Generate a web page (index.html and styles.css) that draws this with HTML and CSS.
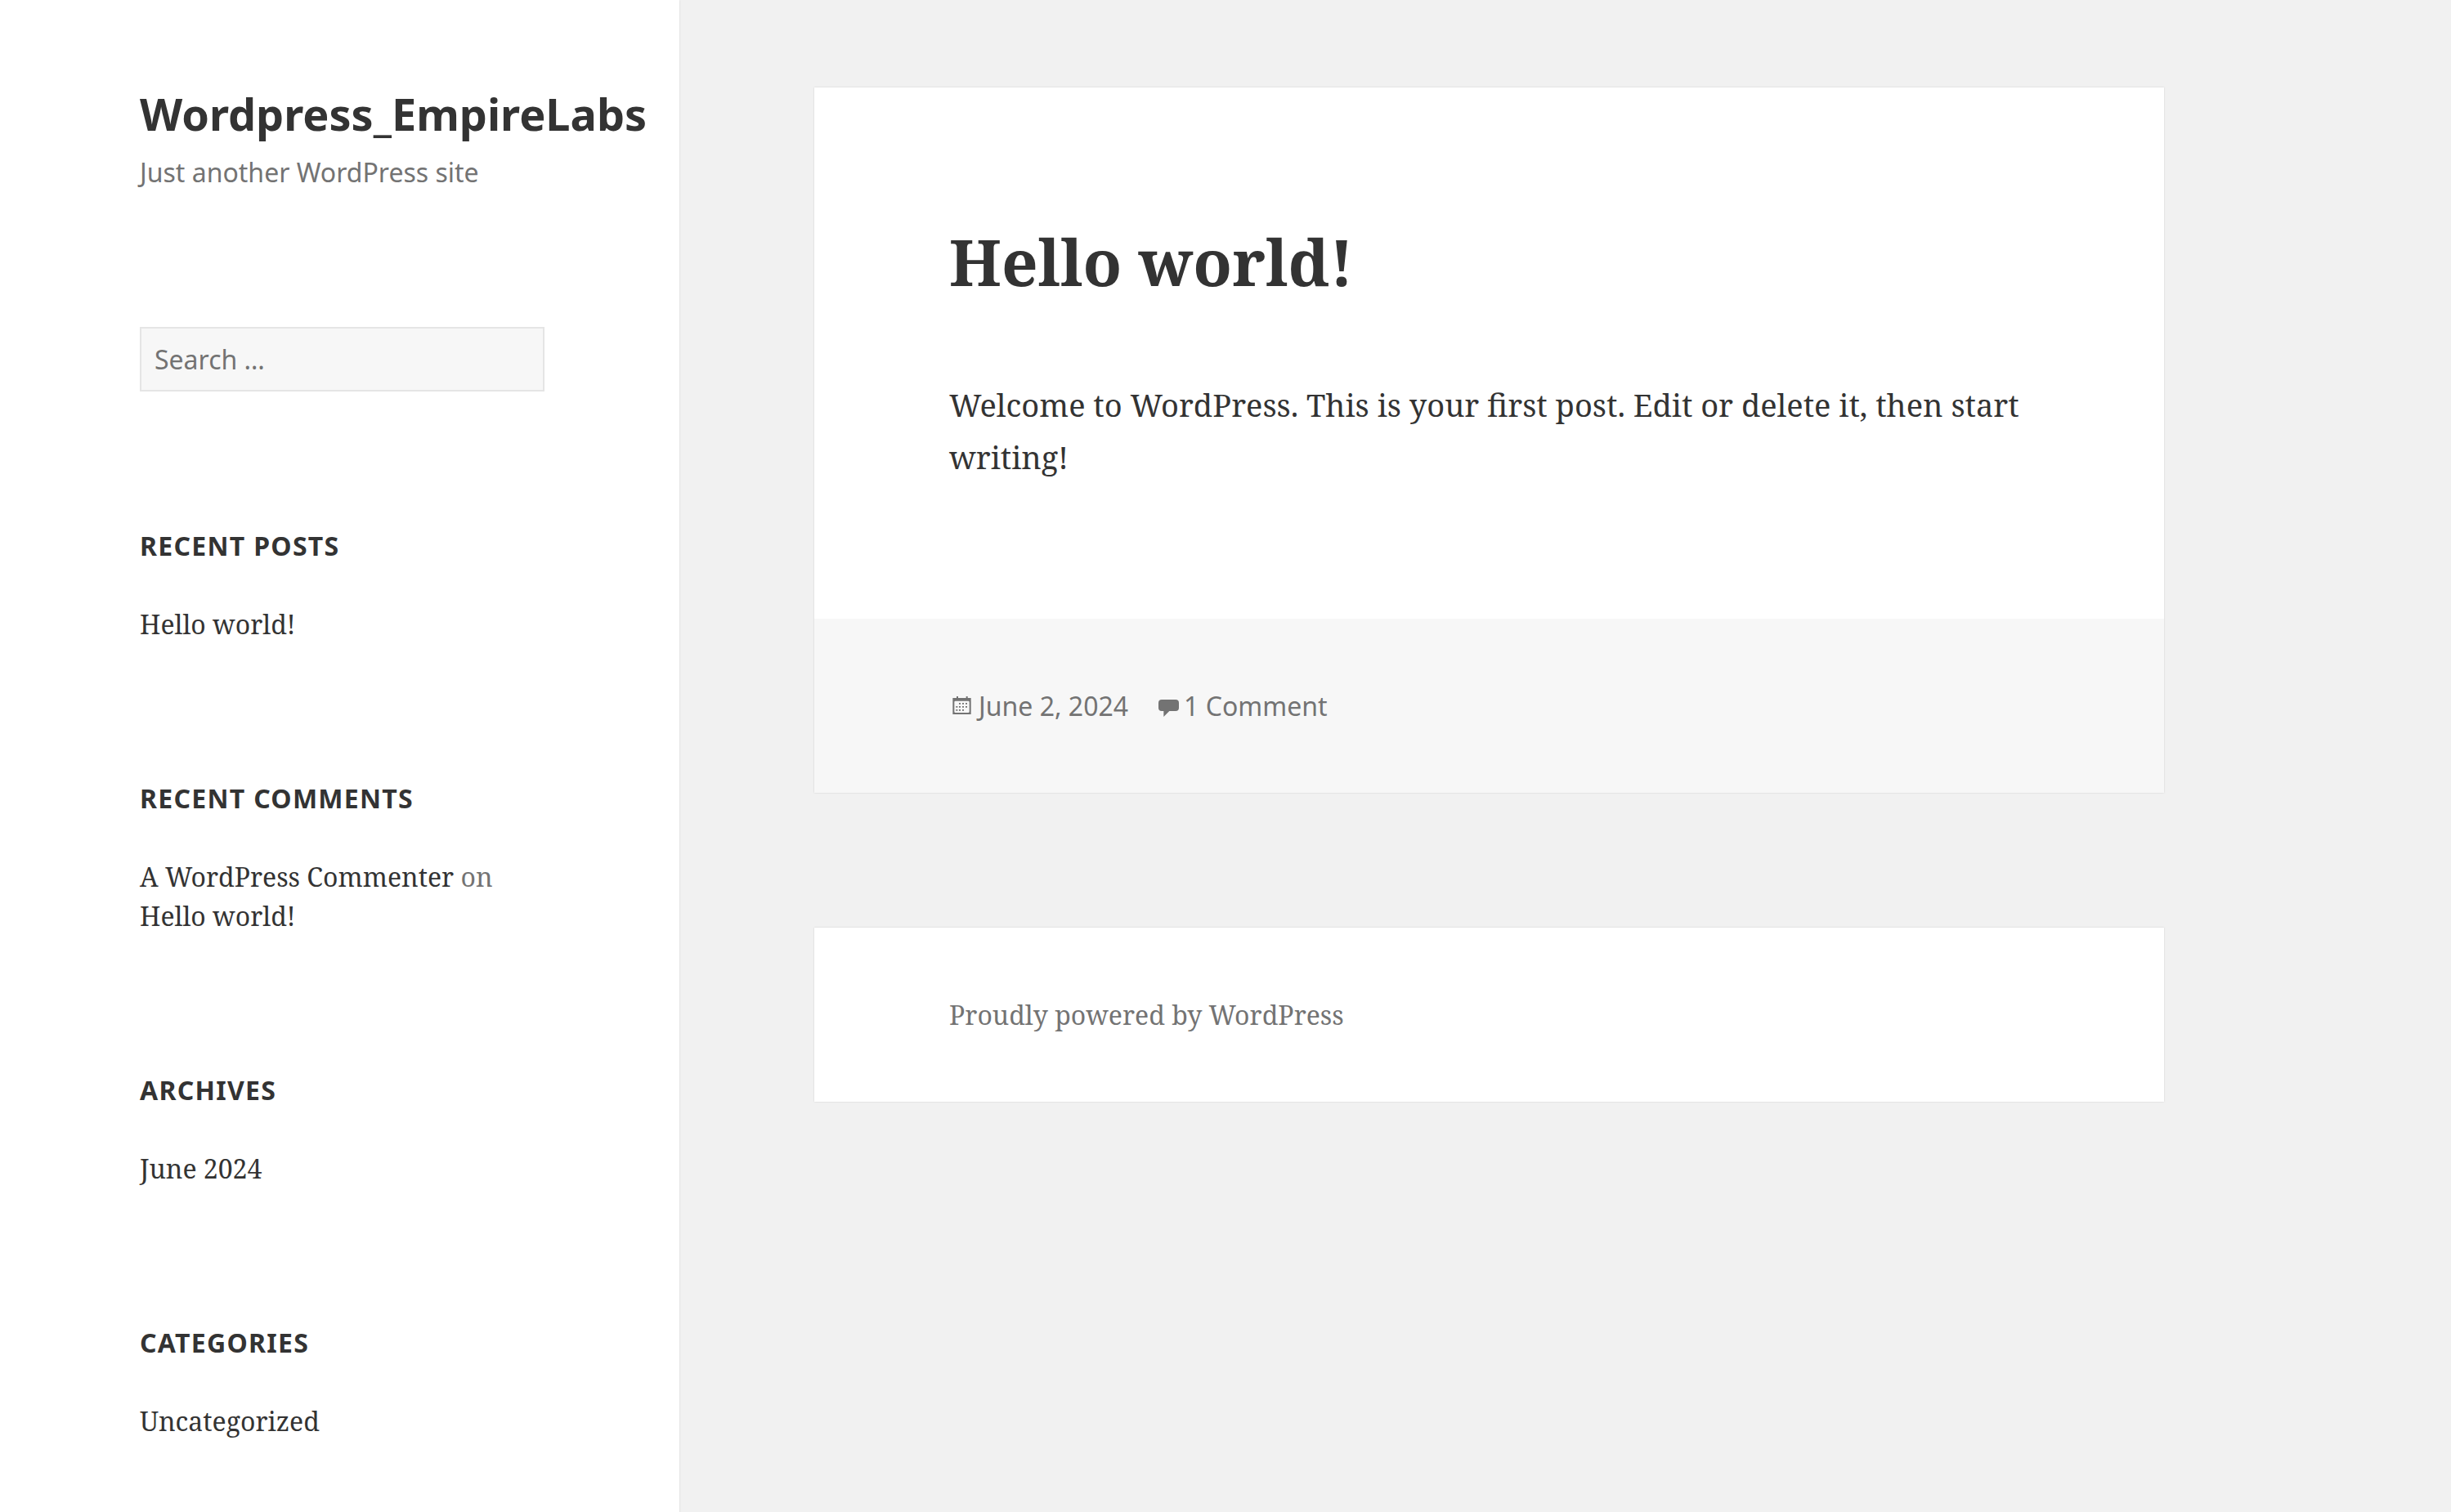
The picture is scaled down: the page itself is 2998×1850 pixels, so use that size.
FILE: index.html
```html
<!DOCTYPE html>
<html lang="en">
<head>
<meta charset="utf-8">
<meta name="viewport" content="width=device-width, initial-scale=1">
<title>Wordpress_EmpireLabs</title>
<link rel="stylesheet" href="styles.css">
</head>
<body>
<div class="site">
  <div class="sidebar">
    <header class="branding">
      <h1 class="site-title"><a href="#">Wordpress_EmpireLabs</a></h1>
      <p class="site-description">Just another WordPress site</p>
    </header>
    <form class="search" role="search">
      <input class="search-field" type="search" placeholder="Search …" aria-label="Search for:">
    </form>
    <section class="widget">
      <h2 class="widget-title">Recent Posts</h2>
      <ul class="widget-list"><li><a href="#">Hello world!</a></li></ul>
    </section>
    <section class="widget">
      <h2 class="widget-title">Recent Comments</h2>
      <ul class="widget-list"><li><a href="#">A WordPress Commenter</a> on <a href="#">Hello world!</a></li></ul>
    </section>
    <section class="widget">
      <h2 class="widget-title">Archives</h2>
      <ul class="widget-list"><li><a href="#">June 2024</a></li></ul>
    </section>
    <section class="widget">
      <h2 class="widget-title">Categories</h2>
      <ul class="widget-list"><li><a href="#">Uncategorized</a></li></ul>
    </section>
  </div>
  <div class="content">
    <main>
      <article class="card">
        <div class="entry">
          <h2 class="entry-title"><a href="#">Hello world!</a></h2>
          <p class="entry-text">Welcome to WordPress. This is your first post. Edit or delete it, then start writing!</p>
        </div>
        <footer class="entry-meta">
          <a class="meta-item" href="#">
            <svg class="icon" viewBox="0 0 96 96" aria-hidden="true">
              <path fill-rule="evenodd" d="M13 18h14v-6h6v6h29v-6h6v6h12v60H13zM23 29q-4 0-4 4v35q0 4 4 4h47q4 0 4-4V33q0-4-4-4z"/>
              <path d="M36 36h6v5h-6zM48 36h6v5h-6zM60 36h6v5h-6zM25 48h6v5h-6zM36 48h6v5h-6zM48 48h6v5h-6zM60 48h6v5h-6zM25 60h6v5h-6zM36 60h6v5h-6zM48 60h6v5h-6z"/>
            </svg>
            <time datetime="2024-06-02">June 2, 2024</time>
          </a>
          <a class="meta-item" href="#">
            <svg class="icon" viewBox="0 0 96 96" aria-hidden="true">
              <path d="M27 24h51q12 0 12 12v18q0 12-12 12H55L34 87V66h-7q-12 0-12-12V36q0-12 12-12z"/>
            </svg>
            <span>1 Comment</span>
          </a>
        </footer>
      </article>
    </main>
    <footer class="card site-footer"><a href="#">Proudly powered by WordPress</a></footer>
  </div>
</div>
</body>
</html>
```
FILE: styles.css
```css
:root {
  --sans: "Noto Sans", sans-serif;
  --serif: "Noto Serif", "Droid Serif", serif;
  --dark: #333;
  --muted: #737373;
  --space: 165px;
}

* { box-sizing: border-box; }

body {
  margin: 0;
  background: #f1f1f1;
  color: var(--dark);
  font: 32px/48px var(--serif);
}

h1, h2, p, ul { margin: 0; padding: 0; }
ul { list-style: none; }
a { color: inherit; text-decoration: none; }

.site {
  display: grid;
  grid-template-columns: 831px minmax(0, 1fr);
  min-height: 100vh;
  max-width: 2812px;
}

.sidebar {
  display: grid;
  grid-template-columns: minmax(0, 1fr);
  align-content: start;
  gap: var(--space);
  padding: 106px var(--space) 98px 171px;
  background: #fff;
  box-shadow: 0 0 2px rgba(0, 0, 0, 0.15);
}

.site-title {
  margin-bottom: 15px;
  font: bold 54px/66px var(--sans);
}

.site-description {
  color: var(--muted);
  font-family: var(--sans);
}

.search { display: flex; }

.search-field {
  flex: 1;
  min-width: 0;
  height: 79px;
  padding: 0 16px;
  border: 2px solid #e5e5e5;
  border-radius: 0;
  background: #f7f7f7;
  color: var(--dark);
  font: 32px/48px var(--sans);
  appearance: none;
}

.search-field::placeholder { color: var(--muted); }

.widget-title {
  margin-bottom: 48px;
  font: bold 32px/48px var(--sans);
  letter-spacing: 0.04em;
  text-transform: uppercase;
}

.widget-list { color: var(--muted); }
.widget-list a { color: var(--dark); }

.content {
  display: flex;
  flex-direction: column;
  gap: var(--space);
  padding: 107px var(--space);
}

.card {
  background: #fff;
  box-shadow: 0 0 2px rgba(0, 0, 0, 0.15);
}

.entry { padding: var(--space) var(--space) 166px; }

.entry-title {
  margin-bottom: 95px;
  font-size: 78px;
  line-height: 96px;
}

.entry-text {
  font-size: 38px;
  line-height: 64px;
}

.entry-meta {
  display: flex;
  gap: 32px;
  padding: 83px var(--space) 82px;
  background: #f7f7f7;
  color: var(--muted);
  font-family: var(--sans);
}

.meta-item {
  display: flex;
  align-items: center;
  gap: 4px;
}

.icon {
  width: 32px;
  height: 32px;
  fill: currentColor;
}

.site-footer {
  padding: 83px var(--space) 82px;
  color: var(--muted);
}
```
